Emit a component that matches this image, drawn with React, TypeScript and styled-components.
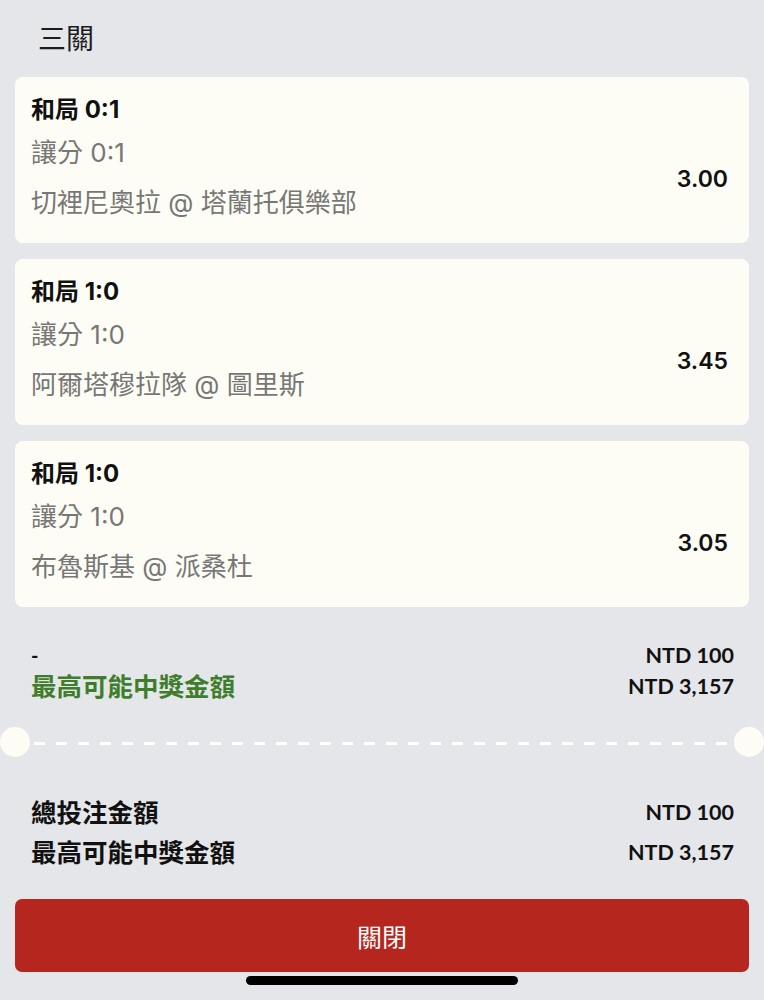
import React from 'react';
import styled, { createGlobalStyle } from 'styled-components';

const GlobalStyle = createGlobalStyle`
  html, body {
    margin: 0;
    padding: 0;
    background: #e5e6e9;
  }
  body {
    font-family: Inter, 'Noto Sans CJK TC', sans-serif;
  }
`;

const Page = styled.div`
  width: 764px;
  min-height: 1000px;
  box-sizing: border-box;
  display: flex;
  flex-direction: column;
  background: #e5e6e9;
  color: #111;
`;

const Title = styled.h1`
  margin: 0;
  height: 77px;
  display: flex;
  align-items: center;
  padding: 0 0 4px 38px;
  box-sizing: border-box;
  font-size: 28px;
  font-weight: 400;
  color: #1c1c1c;
  font-family: 'Noto Sans CJK TC', sans-serif;
`;

const CardList = styled.div`
  display: flex;
  flex-direction: column;
  gap: 16px;
  padding: 0 15px;
`;

const Card = styled.div`
  display: grid;
  grid-template-columns: 1fr auto;
  grid-template-rows: auto auto auto;
  background: #fefdf5;
  border-radius: 8px;
  padding: 18px 21px 25px 16px;
  height: 166px;
  box-sizing: border-box;
`;

const Line = styled.div<{ $strong?: boolean; $gap: number }>`
  grid-column: 1;
  margin-top: ${p => p.$gap}px;
  font-size: ${p => (p.$strong ? 24 : 26)}px;
  line-height: 30px;
  font-weight: ${p => (p.$strong ? 700 : 400)};
  color: ${p => (p.$strong ? '#111' : '#777')};
  font-family: Inter, 'Noto Sans CJK TC', sans-serif;
`;

const Odds = styled.div`
  grid-column: 2;
  grid-row: 2 / span 2;
  align-self: center;
  font-size: 23px;
  font-weight: 600;
  color: #111;
  padding-top: 14px;
`;

const Summary = styled.div`
  display: grid;
  grid-template-columns: 1fr auto;
  padding: 33px 30px 0 31px;
  row-gap: 1px;
  align-items: center;
`;

const SummaryLabel = styled.div<{ $green?: boolean }>`
  font-family: Lato, 'Noto Sans CJK TC', sans-serif;
  font-size: ${p => (p.$green ? 25.5 : 20)}px;
  line-height: 30px;
  font-weight: 700;
  color: ${p => (p.$green ? '#3e7e2b' : '#111')};
`;

const Amount = styled.div`
  font-family: Lato, sans-serif;
  font-size: 21.5px;
  line-height: 30px;
  font-weight: 700;
  text-align: right;
  color: #111;
`;

const Divider = styled.div`
  display: flex;
  align-items: center;
  margin-top: 26px;
  height: 30px;
`;

const Notch = styled.div`
  width: 30px;
  height: 30px;
  border-radius: 50%;
  background: #fefdf5;
  flex: none;
`;

const Dashes = styled.div`
  flex: 1;
  height: 3px;
  margin: 2px 4px 0;
  background: repeating-linear-gradient(
    to right,
    #ffffff 0,
    #ffffff 11px,
    transparent 11px,
    transparent 22px
  );
`;

const Totals = styled.div`
  display: grid;
  grid-template-columns: 1fr auto;
  padding: 40px 30px 0 31px;
  row-gap: 10px;
  align-items: center;
`;

const TotalLabel = styled.div`
  font-family: Lato, 'Noto Sans CJK TC', sans-serif;
  font-size: 25.5px;
  line-height: 30px;
  font-weight: 700;
  color: #111;
`;

const CloseButton = styled.button`
  margin: 32px 15px 0;
  height: 73px;
  border: none;
  border-radius: 7px;
  background: #b5261e;
  color: #fff;
  font-family: 'Noto Sans CJK TC', sans-serif;
  font-size: 25px;
  font-weight: 400;
  cursor: pointer;
`;

const HomeBar = styled.div`
  align-self: center;
  width: 272px;
  height: 9px;
  border-radius: 5px;
  background: #000;
  margin-top: 4px;
`;

type Leg = {
  pick: string;
  market: string;
  match: string;
  odds: string;
};

const LEGS: Leg[] = [
  { pick: '和局 0:1', market: '讓分 0:1', match: '切裡尼奧拉 @ 塔蘭托俱樂部', odds: '3.00' },
  { pick: '和局 1:0', market: '讓分 1:0', match: '阿爾塔穆拉隊 @ 圖里斯', odds: '3.45' },
  { pick: '和局 1:0', market: '讓分 1:0', match: '布魯斯基 @ 派桑杜', odds: '3.05' },
];

const LegCard: React.FC<{ leg: Leg }> = ({ leg }) => (
  <Card>
    <Line $strong $gap={0}>{leg.pick}</Line>
    <Line $gap={13}>{leg.market}</Line>
    <Line $gap={19}>{leg.match}</Line>
    <Odds>{leg.odds}</Odds>
  </Card>
);

const App: React.FC = () => (
  <>
    <GlobalStyle />
    <Page>
      <Title>三關</Title>
      <CardList>
        {LEGS.map((leg, i) => (
          <LegCard key={i} leg={leg} />
        ))}
      </CardList>
      <Summary>
        <SummaryLabel>-</SummaryLabel>
        <Amount>NTD 100</Amount>
        <SummaryLabel $green>最高可能中獎金額</SummaryLabel>
        <Amount>NTD 3,157</Amount>
      </Summary>
      <Divider>
        <Notch />
        <Dashes />
        <Notch />
      </Divider>
      <Totals>
        <TotalLabel>總投注金額</TotalLabel>
        <Amount>NTD 100</Amount>
        <TotalLabel>最高可能中獎金額</TotalLabel>
        <Amount>NTD 3,157</Amount>
      </Totals>
      <CloseButton>關閉</CloseButton>
      <HomeBar />
    </Page>
  </>
);

export default App;
